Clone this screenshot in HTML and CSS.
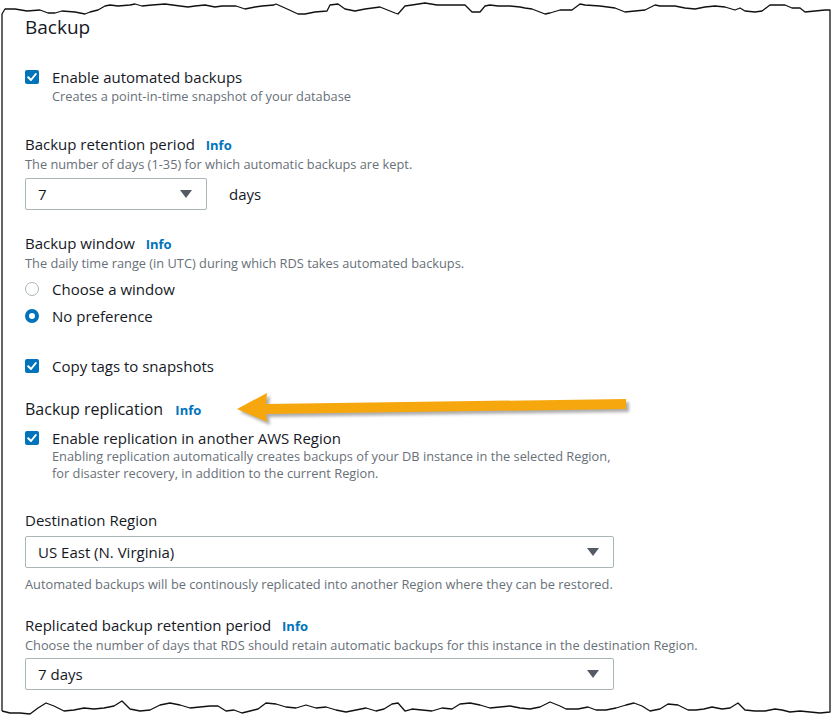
FILE: index.html
```html
<!DOCTYPE html>
<html>
<head>
<meta charset="utf-8">
<link rel="stylesheet" href="styles.css">
</head>
<body>
<div class="page">
  <h2 class="title">Backup</h2>

  <div class="check-row first">
    <span class="checkbox"><svg viewBox="0 0 14 14" width="14" height="14"><path d="M3.2 7.2 L6 10 L10.8 4" fill="none" stroke="#fff" stroke-width="2" stroke-linecap="round" stroke-linejoin="round"/></svg></span>
    <span class="check-label">Enable automated backups</span>
  </div>
  <div class="desc indent">Creates a point-in-time snapshot of your database</div>

  <div class="field gap-a">
    <div class="label">Backup retention period <a class="info">Info</a></div>
    <div class="desc">The number of days (1-35) for which automatic backups are kept.</div>
    <div class="select-line">
      <div class="select small"><span>7</span><span class="caret"></span></div>
      <span class="unit">days</span>
    </div>
  </div>

  <div class="field gap-b">
    <div class="label">Backup window <a class="info">Info</a></div>
    <div class="desc">The daily time range (in UTC) during which RDS takes automated backups.</div>
    <div class="radio-row"><span class="radio"></span><span class="check-label">Choose a window</span></div>
    <div class="radio-row"><span class="radio on"></span><span class="check-label">No preference</span></div>
  </div>

  <div class="check-row copy">
    <span class="checkbox"><svg viewBox="0 0 14 14" width="14" height="14"><path d="M3.2 7.2 L6 10 L10.8 4" fill="none" stroke="#fff" stroke-width="2" stroke-linecap="round" stroke-linejoin="round"/></svg></span>
    <span class="check-label">Copy tags to snapshots</span>
  </div>

  <div class="sub-title">Backup replication <a class="info">Info</a></div>
  <div class="check-row repl">
    <span class="checkbox"><svg viewBox="0 0 14 14" width="14" height="14"><path d="M3.2 7.2 L6 10 L10.8 4" fill="none" stroke="#fff" stroke-width="2" stroke-linecap="round" stroke-linejoin="round"/></svg></span>
    <span class="check-label">Enable replication in another AWS Region</span>
  </div>
  <div class="desc indent two">Enabling replication automatically creates backups of your DB instance in the selected Region,<br>for disaster recovery, in addition to the current Region.</div>

  <div class="field gap-c">
    <div class="label">Destination Region</div>
    <div class="select wide sel-dest"><span>US East (N. Virginia)</span><span class="caret"></span></div>
    <div class="desc after">Automated backups will be continously replicated into another Region where they can be restored.</div>
  </div>

  <div class="field gap-d">
    <div class="label">Replicated backup retention period <a class="info">Info</a></div>
    <div class="desc">Choose the number of days that RDS should retain automatic backups for this instance in the destination Region.</div>
    <div class="select wide sel-ret"><span>7 days</span><span class="caret"></span></div>
  </div>
</div>

<svg class="overlay arrow" viewBox="0 0 833 719" width="833" height="719">
  <defs>
    <filter id="blur" x="-10%" y="-50%" width="120%" height="200%"><feGaussianBlur stdDeviation="1.6"/></filter>
  </defs>
  <g transform="translate(3,3)" fill="#6b6b6b" opacity="0.55" filter="url(#blur)">
    <polygon points="237,409 267,393 266,404 626,399 626,409 266,414 267,422"/>
  </g>
  <polygon fill="#f6a70e" points="237,409 267,393 266,404 626,399 626,409 266,414 267,422"/>
</svg>

<svg class="overlay frame" viewBox="0 0 833 719" width="833" height="719">
  <path fill="#fff" fill-rule="evenodd" d="M0 0 H833 V719 H0 Z M2 14 L5 9 L15 9 L27 11 L40 10 L48 13 L55 13 L62 11 L75 12 L85 14 L90 12 L98 10 L105 6 L110 5 L118 6 L130 5 L135 4 L142 6 L152 5 L165 4 L180 6 L188 7 L195 6 L205 5 L215 7 L222 6 L236 6 L245 9 L255 7 L262 6 L274 5 L276 4 L285 8 L298 14 L305 14 L315 12 L327 11 L330 5 L338 4 L345 9 L355 11 L365 9 L380 7 L395 13 L398 14 L405 6 L412 5 L425 3 L437 5 L445 5 L458 5 L465 5 L472 12 L480 12 L485 6 L490 5 L498 6 L510 6 L520 7 L525 8 L532 9 L545 14 L550 13 L560 10 L572 10 L580 4 L585 5 L600 6 L615 8 L625 12 L635 11 L645 10 L655 5 L660 6 L675 6 L685 8 L695 9 L705 7 L715 6 L725 7 L735 10 L740 8 L745 11 L755 12 L762 11 L770 5 L785 5 L792 8 L800 8 L805 12 L815 11 L825 10 L830 10 L830 712 L820 713 L810 712 L800 711 L790 712 L782 710 L775 709 L765 711 L755 711 L745 710 L738 703 L730 708 L722 709 L712 707 L704 709 L696 710 L688 710 L678 705 L668 704 L660 709 L650 711 L642 706 L634 703 L626 705 L616 708 L606 710 L596 710 L588 707 L578 709 L566 709 L560 706 L550 702 L540 707 L530 709 L520 708 L510 706 L500 707 L490 708 L480 705 L470 703 L460 704 L452 709 L442 708 L432 711 L422 710 L412 709 L405 711 L398 703 L392 704 L384 709 L376 711 L366 708 L356 710 L346 712 L336 710 L326 707 L316 708 L306 705 L296 708 L286 707 L276 704 L266 703 L258 709 L250 711 L242 713 L234 710 L226 711 L218 706 L210 706 L200 707 L190 708 L180 705 L170 703 L160 705 L150 710 L140 711 L130 709 L122 701 L114 706 L104 708 L94 709 L84 708 L74 710 L64 711 L54 706 L46 703 L38 708 L30 714 L20 713 L10 713 L2 711 Z"/>
  <path fill="none" stroke="#111" stroke-width="1.3" stroke-linejoin="round" d="M2 711 L2 14 L5 9 L15 9 L27 11 L40 10 L48 13 L55 13 L62 11 L75 12 L85 14 L90 12 L98 10 L105 6 L110 5 L118 6 L130 5 L135 4 L142 6 L152 5 L165 4 L180 6 L188 7 L195 6 L205 5 L215 7 L222 6 L236 6 L245 9 L255 7 L262 6 L274 5 L276 4 L285 8 L298 14 L305 14 L315 12 L327 11 L330 5 L338 4 L345 9 L355 11 L365 9 L380 7 L395 13 L398 14 L405 6 L412 5 L425 3 L437 5 L445 5 L458 5 L465 5 L472 12 L480 12 L485 6 L490 5 L498 6 L510 6 L520 7 L525 8 L532 9 L545 14 L550 13 L560 10 L572 10 L580 4 L585 5 L600 6 L615 8 L625 12 L635 11 L645 10 L655 5 L660 6 L675 6 L685 8 L695 9 L705 7 L715 6 L725 7 L735 10 L740 8 L745 11 L755 12 L762 11 L770 5 L785 5 L792 8 L800 8 L805 12 L815 11 L825 10 L830 10 L830 712 L820 713 L810 712 L800 711 L790 712 L782 710 L775 709 L765 711 L755 711 L745 710 L738 703 L730 708 L722 709 L712 707 L704 709 L696 710 L688 710 L678 705 L668 704 L660 709 L650 711 L642 706 L634 703 L626 705 L616 708 L606 710 L596 710 L588 707 L578 709 L566 709 L560 706 L550 702 L540 707 L530 709 L520 708 L510 706 L500 707 L490 708 L480 705 L470 703 L460 704 L452 709 L442 708 L432 711 L422 710 L412 709 L405 711 L398 703 L392 704 L384 709 L376 711 L366 708 L356 710 L346 712 L336 710 L326 707 L316 708 L306 705 L296 708 L286 707 L276 704 L266 703 L258 709 L250 711 L242 713 L234 710 L226 711 L218 706 L210 706 L200 707 L190 708 L180 705 L170 703 L160 705 L150 710 L140 711 L130 709 L122 701 L114 706 L104 708 L94 709 L84 708 L74 710 L64 711 L54 706 L46 703 L38 708 L30 714 L20 713 L10 713 L2 711"/>
</svg>
</body>
</html>
```

FILE: styles.css
```css
html, body {
  margin: 0;
  padding: 0;
  background: #fff;
}
body {
  width: 833px;
  height: 719px;
  overflow: hidden;
  position: relative;
  font-family: "Open Sans", "Noto Sans", "Liberation Sans", sans-serif;
  color: #16191f;
}
.page {
  padding: 15px 0 0 25px;
}
.title {
  margin: 0;
  font-size: 19px;
  line-height: 24px;
  font-weight: 400;
}
.check-row, .radio-row {
  display: flex;
  align-items: center;
  height: 20px;
}
.check-row.first { margin-top: 28px; }
.check-row.copy { margin-top: 30px; }
.check-row.repl { margin-top: 7px; }
.checkbox {
  width: 14px;
  height: 14px;
  background: #0073bb;
  border-radius: 2px;
  display: flex;
  flex: none;
}
.check-label {
  margin-left: 13px;
  font-size: 15px;
  line-height: 20px;
}
.desc {
  font-size: 12.8px;
  line-height: 18px;
  color: #687078;
}
.desc.indent { margin-left: 27px; }
.desc.two { line-height: 17px; }
.desc.after { margin-top: 7px; }
.field.gap-a { margin-top: 29px; }
.field.gap-b { margin-top: 23px; }
.field.gap-c { margin-top: 28px; }
.field.gap-d { margin-top: 22px; }
.label {
  font-size: 15px;
  line-height: 20px;
}
.info {
  margin-left: 7px;
  font-size: 13px;
  font-weight: 700;
  color: #0073bb;
}
.sub-title {
  margin-top: 22px;
  font-size: 16px;
  line-height: 22px;
}
.sub-title .info { margin-left: 8px; }
.select-line {
  display: flex;
  align-items: center;
  margin-top: 5px;
}
.select {
  box-sizing: border-box;
  height: 32px;
  border: 1px solid #aab7b8;
  border-radius: 2px;
  display: flex;
  align-items: center;
  justify-content: space-between;
  padding: 0 14px 0 12px;
  font-size: 15px;
}
.select.small { width: 182px; }
.select.wide { width: 589px; }
.sel-dest { margin-top: 6px; }
.sel-ret { margin-top: 4px; }
.caret {
  width: 0;
  height: 0;
  border-left: 6px solid transparent;
  border-right: 6px solid transparent;
  border-top: 8px solid #545b64;
}
.unit {
  margin-left: 22px;
  font-size: 15px;
}
.radio-row { margin-top: 7px; }
.radio {
  box-sizing: border-box;
  width: 14px;
  height: 14px;
  border-radius: 50%;
  border: 1px solid #aab7b8;
  flex: none;
}
.radio.on {
  border: 4px solid #0073bb;
}
.overlay {
  position: absolute;
  left: 0;
  top: 0;
  pointer-events: none;
}
```
